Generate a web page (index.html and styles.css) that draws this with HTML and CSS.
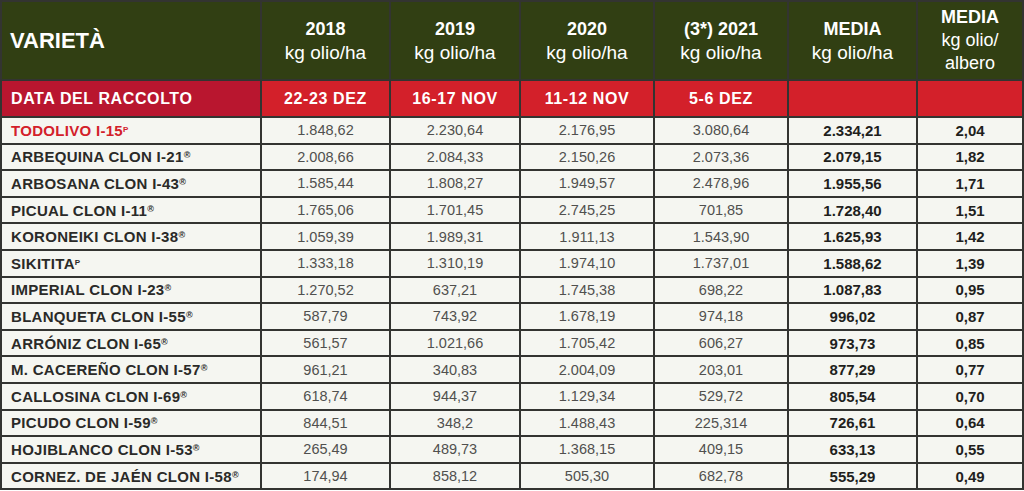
FILE: index.html
```html
<!DOCTYPE html>
<html lang="it">
<head>
<meta charset="utf-8">
<link rel="stylesheet" href="styles.css">
</head>
<body>
<table class="yield">
  <colgroup>
    <col class="c-name"><col class="c-y1"><col class="c-y2"><col class="c-y3"><col class="c-y4"><col class="c-avg"><col class="c-tree">
  </colgroup>
  <thead>
    <tr class="head">
      <th class="title">VARIETÀ</th>
      <th><b>2018</b><span>kg olio/ha</span></th>
      <th><b>2019</b><span>kg olio/ha</span></th>
      <th><b>2020</b><span>kg olio/ha</span></th>
      <th><b>(3*) 2021</b><span>kg olio/ha</span></th>
      <th><b>MEDIA</b><span>kg olio/ha</span></th>
      <th class="tree"><b>MEDIA</b><span>kg olio/<br>albero</span></th>
    </tr>
    <tr class="dates">
      <th class="label">DATA DEL RACCOLTO</th>
      <th>22-23 DEZ</th>
      <th>16-17 NOV</th>
      <th>11-12 NOV</th>
      <th>5-6 DEZ</th>
      <th></th>
      <th></th>
    </tr>
  </thead>
  <tbody>
    <tr><td class="name hi">TODOLIVO I-15<sup class="p">P</sup></td><td>1.848,62</td><td>2.230,64</td><td>2.176,95</td><td>3.080,64</td><td class="avg">2.334,21</td><td class="avg">2,04</td></tr>
    <tr><td class="name">ARBEQUINA CLON I-21<sup>®</sup></td><td>2.008,66</td><td>2.084,33</td><td>2.150,26</td><td>2.073,36</td><td class="avg">2.079,15</td><td class="avg">1,82</td></tr>
    <tr><td class="name">ARBOSANA CLON I-43<sup>®</sup></td><td>1.585,44</td><td>1.808,27</td><td>1.949,57</td><td>2.478,96</td><td class="avg">1.955,56</td><td class="avg">1,71</td></tr>
    <tr><td class="name">PICUAL CLON I-11<sup>®</sup></td><td>1.765,06</td><td>1.701,45</td><td>2.745,25</td><td>701,85</td><td class="avg">1.728,40</td><td class="avg">1,51</td></tr>
    <tr><td class="name">KORONEIKI CLON I-38<sup>®</sup></td><td>1.059,39</td><td>1.989,31</td><td>1.911,13</td><td>1.543,90</td><td class="avg">1.625,93</td><td class="avg">1,42</td></tr>
    <tr><td class="name">SIKITITA<sup class="p">P</sup></td><td>1.333,18</td><td>1.310,19</td><td>1.974,10</td><td>1.737,01</td><td class="avg">1.588,62</td><td class="avg">1,39</td></tr>
    <tr><td class="name">IMPERIAL CLON I-23<sup>®</sup></td><td>1.270,52</td><td>637,21</td><td>1.745,38</td><td>698,22</td><td class="avg">1.087,83</td><td class="avg">0,95</td></tr>
    <tr><td class="name">BLANQUETA CLON I-55<sup>®</sup></td><td>587,79</td><td>743,92</td><td>1.678,19</td><td>974,18</td><td class="avg">996,02</td><td class="avg">0,87</td></tr>
    <tr><td class="name">ARRÓNIZ CLON I-65<sup>®</sup></td><td>561,57</td><td>1.021,66</td><td>1.705,42</td><td>606,27</td><td class="avg">973,73</td><td class="avg">0,85</td></tr>
    <tr><td class="name">M. CACEREÑO CLON I-57<sup>®</sup></td><td>961,21</td><td>340,83</td><td>2.004,09</td><td>203,01</td><td class="avg">877,29</td><td class="avg">0,77</td></tr>
    <tr><td class="name">CALLOSINA CLON I-69<sup>®</sup></td><td>618,74</td><td>944,37</td><td>1.129,34</td><td>529,72</td><td class="avg">805,54</td><td class="avg">0,70</td></tr>
    <tr><td class="name">PICUDO CLON I-59<sup>®</sup></td><td>844,51</td><td>348,2</td><td>1.488,43</td><td>225,314</td><td class="avg">726,61</td><td class="avg">0,64</td></tr>
    <tr><td class="name">HOJIBLANCO CLON I-53<sup>®</sup></td><td>265,49</td><td>489,73</td><td>1.368,15</td><td>409,15</td><td class="avg">633,13</td><td class="avg">0,55</td></tr>
    <tr><td class="name">CORNEZ. DE JAÉN CLON I-58<sup>®</sup></td><td>174,94</td><td>858,12</td><td>505,30</td><td>682,78</td><td class="avg">555,29</td><td class="avg">0,49</td></tr>
  </tbody>
</table>
</body>
</html>
```

FILE: styles.css
```css
html, body {
  margin: 0;
  padding: 0;
  background: #ffffff;
}

body {
  font-family: "Liberation Sans", Arial, sans-serif;
}

.yield {
  width: 1022px;
  border-collapse: collapse;
  table-layout: fixed;
  background: #f5f6f1;
}

.c-name { width: 260px; }
.c-y1 { width: 129px; }
.c-y2 { width: 130px; }
.c-y3 { width: 134px; }
.c-y4 { width: 134px; }
.c-avg { width: 129px; }
.c-tree { width: 106px; }

.yield th,
.yield td {
  border: 2px solid #333431;
  padding: 0;
  text-align: center;
  vertical-align: middle;
}

.head th {
  height: 77px;
  background: #313f13;
  color: #ffffff;
  font-weight: normal;
  font-size: 19px;
  line-height: 24px;
}

.head th b {
  display: block;
  font-weight: bold;
  font-size: 18px;
}

.head th span {
  display: block;
}

.head th.tree {
  line-height: 23px;
  font-size: 18px;
}

.head th.title {
  text-align: left;
  padding-left: 8px;
  font-size: 22px;
  font-weight: bold;
}

.dates th {
  height: 35px;
  background: #d3202a;
  color: #ffffff;
  font-size: 16px;
  font-weight: bold;
  letter-spacing: 0.6px;
}

.dates th.label {
  background: #b9162f;
  text-align: left;
  padding-left: 9px;
}

.yield td {
  height: 24.6px;
  font-size: 14.5px;
  color: #50504e;
}

.yield td.name {
  text-align: left;
  padding-left: 9px;
  font-weight: bold;
  color: #2a2a28;
  font-size: 15px;
  letter-spacing: 0.3px;
  white-space: nowrap;
}

.yield td.name.hi {
  color: #d3202a;
}

.yield td.avg {
  font-weight: bold;
  font-size: 15px;
  color: #1f1f1d;
}

.yield sup {
  font-size: 9px;
  line-height: 0;
  vertical-align: 4px;
  font-weight: bold;
  letter-spacing: 0;
}

.yield sup.p {
  font-size: 8px;
}
```
